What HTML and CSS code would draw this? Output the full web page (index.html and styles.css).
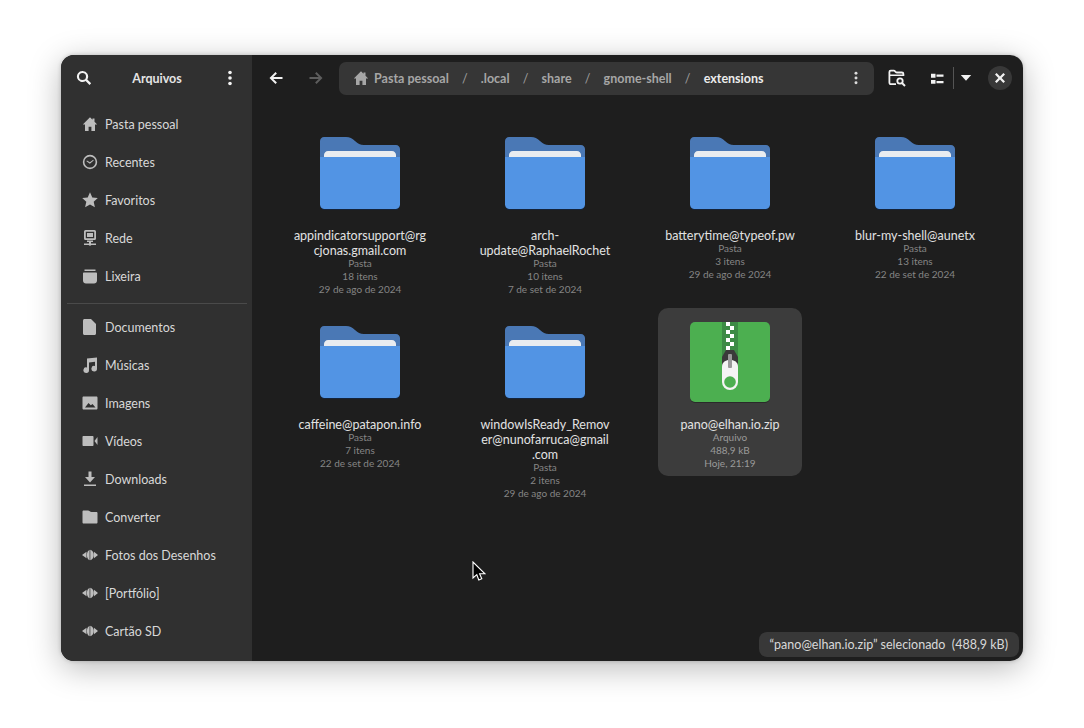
FILE: index.html
```html
<!DOCTYPE html>
<html lang="pt-BR">
<head>
    <meta charset="UTF-8">
    <title>Arquivos</title>
    <link rel="stylesheet" href="styles.css">
</head>
<body>
    <svg class="defs" width="0" height="0">
        <symbol id="i-home" viewBox="0 0 16 16"><path d="M8 1.200 .8 8.400h2.200V15h3.600v-4.200h2.800V15H13V8.400h2.200L12.500 5.700V2.500h-2v1.200z"/></symbol>
        <symbol id="i-drive" viewBox="0 0 16 16"><path d="M0 8l4.500-3.200v6.400zM16 8l-4-3.200v6.400zM7.600 2.700C5.800 3.600 4.900 5.700 4.900 8s.9 4.400 2.700 5.300zM8.300 2.700v10.600C10.600 12.600 11.800 10.400 11.800 8s-1.200-4.600-3.500-5.300z"/></symbol>
        <symbol id="i-folder" viewBox="0 0 80 74">
            <path fill="#4a78b5" d="M4 0h22c4 0 6 1.500 9 4s5 4 9 4h32c2.200 0 4 1.800 4 4v30H0V4c0-2.200 1.800-4 4-4z"/>
            <path fill="#e9ecf0" d="M4 18c0-2.200 1.800-4 4-4h64c2.200 0 4 1.800 4 4v4H4z"/>
            <path fill="#5294e4" d="M0 20h80v48c0 2.200-1.800 4-4 4H4c-2.200 0-4-1.800-4-4z"/>
            <path fill="#14233a" d="M0 68c0 2.200 1.800 4 4 4h72c2.200 0 4-1.800 4-4v1c0 2.200-1.800 4-4 4H4c-2.200 0-4-1.800-4-4z"/>
        </symbol>
    </svg>

    <div class="window">
        <aside class="sidebar">
            <div class="side-head">
                <svg class="ico-w" width="16" height="16" viewBox="0 0 16 16"><path d="M6.500 1a5.500 5.500 0 1 0 3.100 10l3.900 4 1.700-1.700-3.900-3.900A5.500 5.500 0 0 0 6.500 1zm0 2a3.500 3.500 0 1 1 0 7 3.500 3.500 0 0 1 0-7z"/></svg>
                <span class="side-title">Arquivos</span>
                <svg class="ico-w" width="16" height="16" viewBox="0 0 16 16"><circle cx="8" cy="2.500" r="1.800"/><circle cx="8" cy="8" r="1.800"/><circle cx="8" cy="13.500" r="1.800"/></svg>
            </div>
            <ul class="places">
                <li><svg class="ico"><use href="#i-home"/></svg>Pasta pessoal</li>
                <li><svg class="ico" viewBox="0 0 16 16"><path fill-rule="evenodd" d="M8 .8a7.200 7.200 0 1 0 0 14.400A7.200 7.200 0 0 0 8 .8zm0 1.600a5.600 5.600 0 1 1 0 11.200A5.600 5.600 0 0 1 8 2.400z"/><path d="M4.900 6.600l3 1.700 3.300-2.500.5.600-3.800 3.300-3.500-2.400z"/></svg>Recentes</li>
                <li><svg class="ico" viewBox="0 0 16 16"><path d="M8 .3l2.300 5.100 5.500.6-4.100 3.700 1.200 5.500L8 12.400l-4.900 2.800 1.200-5.500L.2 6l5.500-.6z"/></svg>Favoritos</li>
                <li><svg class="ico" viewBox="0 0 16 16"><path fill-rule="evenodd" d="M3.500 0h9A1.500 1.500 0 0 1 14 1.500v7a1.500 1.500 0 0 1-1.500 1.500h-9A1.500 1.500 0 0 1 2 8.500v-7A1.500 1.500 0 0 1 3.500 0zm.3 1.700v6.600h8.400V1.700z"/><path d="M5 3h6v4H5zM5 10.500h6v1.500H9v1.500h5V15H9.300a1.500 1.500 0 0 1-2.600 0H2v-1.500h5V12H5z"/></svg>Rede</li>
                <li><svg class="ico" viewBox="0 0 16 16"><path d="M2.500 1.500h11V3h-11zM2 4.500h12c.5 0 1 .4 1 1v7c0 1.700-1.300 3-3 3H4c-1.700 0-3-1.300-3-3v-7c0-.6.500-1 1-1z"/></svg>Lixeira</li>
            </ul>
            <div class="side-sep"></div>
            <ul class="places">
                <li><svg class="ico" viewBox="0 0 16 16"><path d="M2.500 0H9l5 5v9.500c0 .8-.7 1.500-1.500 1.500h-10C1.700 16 1 15.300 1 14.500v-13C1 .7 1.700 0 2.500 0z"/></svg>Documentos</li>
                <li><svg class="ico" viewBox="0 0 16 16"><path d="M5 1.500 15 .5v11.200a2.800 2.800 0 1 1-2-2.700V4.800L7 5.500v7.700a2.800 2.800 0 1 1-2-2.700z"/></svg>Músicas</li>
                <li><svg class="ico" viewBox="0 0 16 16"><path fill-rule="evenodd" d="M1.500 1.500h13c.5 0 1 .5 1 1v11c0 .5-.5 1-1 1h-13c-.5 0-1-.5-1-1v-11c0-.5.5-1 1-1zM3 12.500h10.500L10.500 9 8.800 10.300 6.500 8z"/></svg>Imagens</li>
                <li><svg class="ico" viewBox="0 0 16 16"><path d="M1.500 3h9c.6 0 1 .4 1 1v8c0 .6-.4 1-1 1h-9c-.6 0-1-.4-1-1V4c0-.6.4-1 1-1zM12.500 8 15.500 4v8z"/></svg>Vídeos</li>
                <li><svg class="ico" viewBox="0 0 16 16"><path d="M6.500 .5h3V6H13l-5 5.500L3 6h3.500zM2 13.500h12V15H2z"/></svg>Downloads</li>
                <li><svg class="ico" viewBox="0 0 16 16"><path d="M1.500 1.500H6c1.500 0 2 1.500 3.500 1.500h5c.5 0 1 .5 1 1v9.500c0 .5-.5 1-1 1h-13c-.5 0-1-.5-1-1v-11c0-.5.5-1 1-1z"/></svg>Converter</li>
                <li><svg class="ico"><use href="#i-drive"/></svg>Fotos dos Desenhos</li>
                <li><svg class="ico"><use href="#i-drive"/></svg>[Portfólio]</li>
                <li><svg class="ico"><use href="#i-drive"/></svg>Cartão SD</li>
            </ul>
        </aside>

        <main class="content">
            <header class="toolbar">
                <svg class="ico-w nav-back" width="16" height="16" viewBox="0 0 16 16"><path d="M7.500 2 1.500 8l6 6 1.400-1.400L5.300 9H14.500V7H5.300l3.600-3.600z"/></svg>
                <svg class="ico-dim nav-fwd" width="16" height="16" viewBox="0 0 16 16"><path d="M8.500 2l6 6-6 6-1.400-1.400L10.700 9H1.500V7h9.200L7.100 3.400z"/></svg>
                <div class="pathbar">
                    <svg class="ico crumb-home"><use href="#i-home"/></svg>
                    <span class="crumb">Pasta pessoal</span><span class="slash">/</span>
                    <span class="crumb">.local</span><span class="slash">/</span>
                    <span class="crumb">share</span><span class="slash">/</span>
                    <span class="crumb">gnome-shell</span><span class="slash">/</span>
                    <span class="crumb current">extensions</span>
                    <svg class="ico-w path-menu" width="14" height="14" viewBox="0 0 16 16"><circle cx="8" cy="2.500" r="1.700"/><circle cx="8" cy="8" r="1.700"/><circle cx="8" cy="13.500" r="1.700"/></svg>
                </div>
                <svg class="search-folder" width="18" height="18" viewBox="0 0 18 18"><path fill="none" stroke="#f2f2f2" stroke-width="1.800" d="M8 15.200H3c-1 0-1.600-.6-1.600-1.600V3c0-.8.6-1.300 1.300-1.300h3.100c1.400 0 1.700 1.800 3.200 1.800h4.900c.9 0 1.500.6 1.500 1.500v2"/><path fill="none" stroke="#f2f2f2" stroke-width="1.600" d="M2 6.200h13"/><circle cx="12" cy="12" r="2.700" fill="none" stroke="#f2f2f2" stroke-width="1.800"/><path stroke="#f2f2f2" stroke-width="2" d="M14 14l3 3"/></svg>
                <svg class="ico-w view-list" width="16" height="16" viewBox="0 0 16 16"><path d="M2 3.700h4.500v4H2zM7.500 4.500h7v2.200h-7zM2 10h4.500v3.700H2zM7.500 11h7v2.200h-7z"/></svg>
                <span class="view-sep"></span>
                <svg class="ico-w view-caret" width="12" height="8" viewBox="0 0 12 8"><path d="M.8 1h10.400L6 6.800z"/></svg>
                <span class="close-btn"><svg class="ico-w" width="10" height="10" viewBox="0 0 10 10"><path d="M1.600 0 5 3.400 8.400 0 10 1.600 6.600 5 10 8.400 8.400 10 5 6.600 1.600 10 0 8.400 3.400 5 0 1.600z"/></svg></span>
            </header>

            <section class="files">
                <div class="file">
                    <svg class="thumb"><use href="#i-folder"/></svg>
                    <div class="name">appindicatorsupport@rg<br>cjonas.gmail.com</div>
                    <div class="meta">Pasta<br>18 itens<br>29 de ago de 2024</div>
                </div>
                <div class="file">
                    <svg class="thumb"><use href="#i-folder"/></svg>
                    <div class="name">arch-<br>update@RaphaelRochet</div>
                    <div class="meta">Pasta<br>10 itens<br>7 de set de 2024</div>
                </div>
                <div class="file">
                    <svg class="thumb"><use href="#i-folder"/></svg>
                    <div class="name">batterytime@typeof.pw</div>
                    <div class="meta">Pasta<br>3 itens<br>29 de ago de 2024</div>
                </div>
                <div class="file">
                    <svg class="thumb"><use href="#i-folder"/></svg>
                    <div class="name">blur-my-shell@aunetx</div>
                    <div class="meta">Pasta<br>13 itens<br>22 de set de 2024</div>
                </div>
                <div class="file">
                    <svg class="thumb"><use href="#i-folder"/></svg>
                    <div class="name">caffeine@patapon.info</div>
                    <div class="meta">Pasta<br>7 itens<br>22 de set de 2024</div>
                </div>
                <div class="file">
                    <svg class="thumb"><use href="#i-folder"/></svg>
                    <div class="name">windowIsReady_Remov<br>er@nunofarruca@gmail<br>.com</div>
                    <div class="meta">Pasta<br>2 itens<br>29 de ago de 2024</div>
                </div>
                <div class="file selected">
                    <svg class="zip" width="80" height="80" viewBox="0 0 80 80">
                        <rect y="1" width="80" height="80" rx="5" fill="#2a2a2a"/>
                        <rect width="80" height="80" rx="5" fill="#4caf50"/>
                        <rect x="32" width="16" height="60" fill="#3d8b45"/>
                        <path fill="#fff" d="M36 0h4v4h-4zM40 4h4v4h-4zM36 8h4v4h-4zM40 12h4v4h-4zM36 16h4v4h-4zM40 20h4v4h-4zM36 24h4v4h-4z"/>
                        <path fill="#3a3a3a" d="M36 28h8l4 7v14H32V35z"/>
                        <path fill="#f4f4f4" d="M38 38h4c4 1 6 3 6 7v15a8 8 0 0 1-16 0V45c0-4 2-6 6-7z"/>
                        <rect x="38" y="32" width="4" height="14" rx="1" fill="#9a9a9a"/>
                        <circle cx="40" cy="60" r="5.800" fill="#4caf50"/>
                    </svg>
                    <div class="name">pano@elhan.io.zip</div>
                    <div class="meta">Arquivo<br>488,9 kB<br>Hoje, 21:19</div>
                </div>
            </section>
        </main>

        <div class="status">“pano@elhan.io.zip” selecionado&nbsp; (488,9 kB)</div>
        <svg class="cursor" width="14" height="22" viewBox="0 0 14 22"><path fill="#000" stroke="#fff" stroke-width="1.100" d="M1 1v16l3.800-3.300 2 5.300 3-1.200-2.200-5H13z"/></svg>
    </div>
</body>
</html>
```

FILE: styles.css
```css
* {
    box-sizing: border-box;
}
html, body {
    margin: 0;
    height: 100%;
}
body {
    background: #fff;
    padding: 55px 61px 67px;
    font-family: "Lato", "Noto Sans", sans-serif;
    font-size: 12.5px;
    overflow: hidden;
}
ul {
    list-style: none;
    margin: 0;
    padding: 0;
}
.defs {
    position: absolute;
}
.window {
    position: relative;
    display: flex;
    width: 962px;
    height: 606px;
    border-radius: 13px;
    overflow: hidden;
    background: #1e1e1e;
    box-shadow: 0 7px 32px rgba(0, 0, 0, .28), 0 0 4px rgba(0, 0, 0, .2);
}
.sidebar {
    width: 191px;
    flex: none;
    background: #303030;
    color: #d8d8d8;
}
.side-head {
    display: flex;
    align-items: center;
    justify-content: space-between;
    height: 46px;
    padding: 0 14px 0 15px;
}
.side-title {
    font-weight: 700;
    color: #e4e4e4;
}
.places {
    padding-top: 4px;
}
.places li {
    display: flex;
    align-items: center;
    gap: 7px;
    height: 38px;
    padding-left: 21px;
}
.side-sep {
    height: 1px;
    margin: 8px 5px 0 6px;
    background: #4a4a4a;
}
.ico {
    width: 16px;
    height: 16px;
    flex: none;
    fill: #bdbdbd;
}
.ico-w {
    fill: #f2f2f2;
    flex: none;
}
.ico-dim {
    fill: #5d5d5d;
    flex: none;
}

.content {
    flex: 1;
    min-width: 0;
}
.toolbar {
    display: flex;
    align-items: center;
    height: 46px;
    padding: 0 13px 0 16px;
}
.nav-fwd {
    margin-left: 24px;
}
.pathbar {
    display: flex;
    flex: none;
    align-items: center;
    width: 535px;
    height: 33px;
    margin-left: 15px;
    padding: 0 11px 0 14px;
    border-radius: 7px;
    background: #363636;
    color: #a6a6a6;
    font-weight: 700;
}
.crumb-home {
    margin-right: 5px;
    fill: #a6a6a6;
}
.slash {
    width: 32px;
    text-align: center;
    font-weight: 400;
    color: #a0a0a0;
}
.current {
    color: #ececec;
}
.path-menu {
    margin-left: auto;
    fill: #dcdcdc;
}
.search-folder {
    margin-left: 14px;
    flex: none;
}
.view-list {
    margin-left: 23px;
}
.view-sep {
    flex: none;
    width: 1px;
    height: 22px;
    margin-left: 8px;
    background: #555;
}
.view-caret {
    margin-left: 6px;
}
.close-btn {
    display: flex;
    flex: none;
    align-items: center;
    justify-content: center;
    width: 24px;
    height: 24px;
    margin-left: 16px;
    border-radius: 50%;
    background: #383838;
}

.files {
    display: grid;
    grid-template-columns: repeat(4, 144px);
    column-gap: 41px;
    row-gap: 6px;
    align-items: start;
    padding: 18px 0 0 36px;
}
.file {
    display: flex;
    flex-direction: column;
    align-items: center;
    padding: 14px 0 6px;
    border-radius: 10px;
    text-align: center;
    white-space: nowrap;
}
.file.selected {
    background: #3c3c3c;
}
.thumb {
    width: 80px;
    height: 74px;
    margin: 4px 0 2px;
    flex: none;
}
.zip {
    display: block;
    flex: none;
    overflow: visible;
}
.name {
    margin: 15px 0 -1px;
    line-height: 15px;
    color: #e2e2e2;
}
.meta {
    line-height: 13px;
    font-size: 10px;
    color: #858585;
}
.selected .meta {
    color: #9a9a9a;
}
.status {
    position: absolute;
    right: 4px;
    bottom: 4px;
    height: 25px;
    padding: 0 11px;
    border-radius: 8px;
    background: #383838;
    color: #d8d8d8;
    line-height: 25px;
    white-space: nowrap;
}
.cursor {
    position: absolute;
    left: 411px;
    top: 506px;
}
```
